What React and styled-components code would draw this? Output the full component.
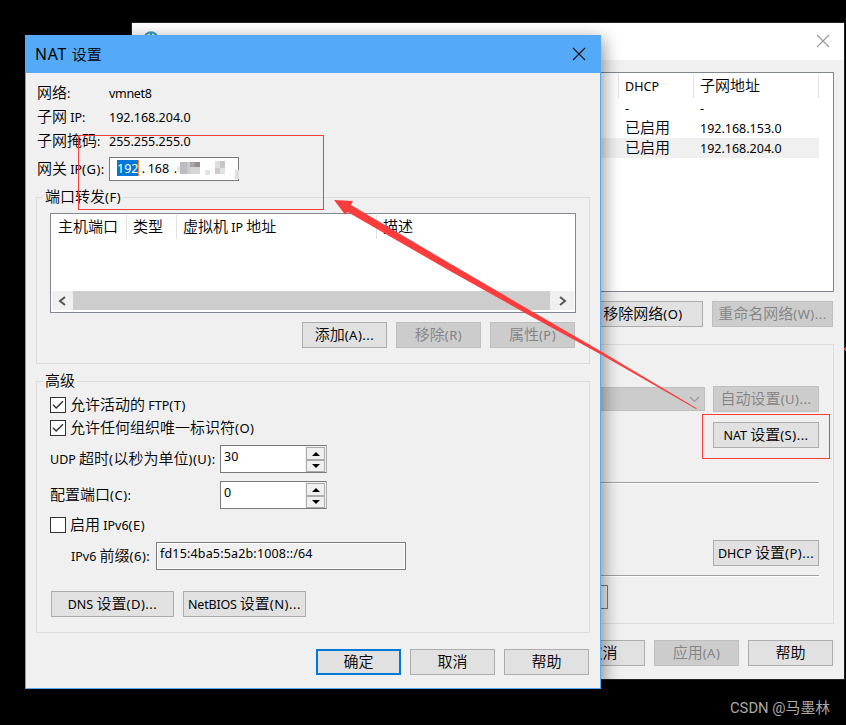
import React from "react";
import styled, { createGlobalStyle, css } from "styled-components";

const Global = createGlobalStyle`
  * { box-sizing: border-box; }
  body { margin: 0; background: #000; overflow: hidden; }
`;

const Desktop = styled.div`
  position: relative;
  width: 846px;
  height: 725px;
  overflow: hidden;
  background: #000;
  color: #000;
  font: 350 15px/20px "Noto Sans CJK SC", sans-serif;
  white-space: nowrap;
`;

const Latin = styled.span`
  font: 400 ${(p) => p.$size}px/1 "Noto Sans", "Noto Sans CJK SC", sans-serif;
  letter-spacing: ${(p) => p.$ls}px;
`;

/* Latin runs use a smaller face than the Chinese characters around them;
   bracketed access keys are set a little wider. */
function T({ children, size = 12.5, ls = 0 }) {
  return (
    <span>
      {children.split(/(\([\x21-\x7e]*|[\x20-\x27\x29-\x7e]+)/).map((s, i) => {
        if (i % 2 === 0) return s;
        const key = s.startsWith("(") || s.startsWith(")");
        return (
          <Latin key={i} $size={key ? 13 : size} $ls={key ? 0.5 : ls}>{s}</Latin>
        );
      })}
    </span>
  );
}

const Window = styled.section`
  position: absolute;
  display: flex;
  flex-direction: column;
  background: #f0f0f0;
`;

const NetworkEditor = styled(Window)`
  left: 131px;
  top: 22px;
  width: 714px;
  height: 658px;
  border: 1px solid #222;
`;

const NatDialog = styled(Window)`
  left: 25px;
  top: 35px;
  width: 576px;
  height: 654px;
  border: 1px solid #56a9f5;
  box-shadow: 3px 4px 16px rgba(0, 0, 0, 0.42);
`;

const TitleBar = styled.header`
  display: flex;
  flex: none;
  align-items: center;
  justify-content: space-between;
  height: 37px;
  padding: 0 14px 2px 9px;
  background: ${(p) => (p.$active ? "#55aaf7" : "#fff")};
  ${(p) => !p.$active && "padding-left: 11px;"}
`;

const Body = styled.div`
  display: flex;
  flex: 1;
  flex-direction: column;
  padding: ${(p) => p.$pad};
`;

const Button = styled.button`
  display: flex;
  flex: none;
  align-items: center;
  justify-content: center;
  width: ${(p) => p.$w || 85}px;
  height: 26px;
  padding: 0 0 3px 0;
  font: inherit;
  color: #000;
  background: #e1e1e1;
  border: 1px solid #adadad;
  border-radius: 0;
  ${(p) => p.$primary && css`
    border: 2px solid #0078d7;
  `}
  &:disabled {
    color: #838383;
    background: #ccc;
    border-color: #bfbfbf;
  }
`;

const ButtonRow = styled.div`
  display: flex;
  flex: none;
  gap: ${(p) => p.$gap || 9}px;
  justify-content: ${(p) => (p.$start ? "flex-start" : "flex-end")};
  margin: ${(p) => p.$m || 0};
`;

const Group = styled.div`
  display: flex;
  flex: none;
  flex-direction: column;
  height: ${(p) => p.$h}px;
  margin: ${(p) => p.$m || 0};
  padding: ${(p) => p.$pad || 0};
  border: 1px solid #dcdcdc;
`;

const Legend = styled.div`
  align-self: flex-start;
  height: 18px;
  margin: -10px 0 0 ${(p) => p.$ml}px;
  padding: 0 2px;
  line-height: 16px;
  background: #f0f0f0;
`;

const List = styled.div`
  display: flex;
  flex: none;
  flex-direction: column;
  height: ${(p) => p.$h}px;
  margin: ${(p) => p.$m || 0};
  border: 1px solid #828790;
  background: #fff;
`;

const HeadRow = styled.div`
  display: grid;
  flex: none;
  grid-template-columns: ${(p) => p.$cols};
  height: 24px;
  margin-top: 1px;
`;

const HeadCell = styled.div`
  padding-left: ${(p) => p.$pl || 6}px;
  line-height: 21px;
  border-right: ${(p) => (p.$last ? "0" : "1px solid #e3e3e3")};
`;

const DataRow = styled.div`
  display: grid;
  grid-template-columns: ${(p) => p.$cols};
  width: 675px;
  height: 20px;
  line-height: 17px;
  background: ${(p) => (p.$selected ? "#f0f0f0" : "#fff")};
`;

const DataCell = styled.div`
  padding-left: 6px;
`;

const ScrollBar = styled.div`
  display: flex;
  height: 19px;
  margin: auto 1px 2px;
  background: #f0f0f0;
`;

const ScrollArrow = styled.div`
  display: flex;
  align-items: center;
  justify-content: center;
  width: ${(p) => p.$w}px;
`;

const ScrollThumb = styled.div`
  flex: 1;
  background: #cdcdcd;
`;

const Field = styled.div`
  display: flex;
  align-items: center;
  height: ${(p) => p.$h}px;
  margin-top: ${(p) => p.$mt || 0}px;
  padding-left: ${(p) => p.$indent || 0}px;
`;

const FieldLabel = styled.div`
  width: ${(p) => p.$w}px;
  flex: none;
  padding-bottom: 2px;
`;

const FieldValue = styled.div`
  padding-bottom: 2px;
`;

const IpBox = styled.div`
  display: flex;
  align-items: center;
  width: 130px;
  height: 24px;
  padding: 0 0 0 7px;
  background: #fff;
  border: 1px solid #7a7a7a;
`;

const Selected = styled.span`
  height: 16px;
  margin-top: -2px;
  line-height: 13px;
  color: #fff;
  background: #0078d7;
  border-right: 1px solid #ff8728;
`;

const IpPart = styled.span`
  width: ${(p) => p.$w}px;
  margin-top: -4px;
  text-align: center;
`;

const Spinner = styled.div`
  display: flex;
  width: 107px;
  height: 28px;
  background: #fff;
  border: 1px solid #7a7a7a;
  border-right-color: #abadb3;
`;

const SpinnerValue = styled.div`
  flex: 1;
  padding-left: 3px;
  line-height: 17px;
`;

const SpinnerButtons = styled.div`
  display: grid;
  grid-template-rows: 13px 12px;
  width: 21px;
  height: 26px;
  padding: 1px 1px 0 1px;
  background: #f0f0f0;
`;

const SpinnerButton = styled.div`
  display: flex;
  align-items: center;
  justify-content: center;
  background: #f0f0f0;
  border: 1px solid #acacac;
`;

const PrefixBox = styled.div`
  width: 250px;
  height: 28px;
  padding-left: 3px;
  line-height: 18px;
  border: 1px solid #7a7a7a;
  box-shadow: inset 0 0 0 1px #fff;
`;

const CheckRow = styled.label`
  display: flex;
  flex: none;
  align-items: center;
  gap: 4px;
  height: 16px;
  margin-top: ${(p) => p.$mt}px;
`;

const CheckText = styled.span`
  padding-bottom: 2px;
`;

const CheckBox = styled.span`
  display: flex;
  width: 16px;
  height: 16px;
  background: #fff;
  border: 1px solid #333;
`;

const Combo = styled.div`
  display: flex;
  align-items: center;
  justify-content: flex-end;
  width: 400px;
  height: 24px;
  margin-top: 1px;
  padding-right: 4px;
  background: #ccc;
  border: 1px solid #bfbfbf;
`;

const Rule = styled.div`
  flex: none;
  height: 2px;
  margin: ${(p) => p.$m};
  background: #fff;
  border-top: 1px solid #a0a0a0;
`;

const SubnetBox = styled.div`
  width: 200px;
  height: 24px;
  margin-left: 264px;
  border: 1px solid #7a7a7a;
`;

const Annotations = styled.svg`
  position: absolute;
  inset: 0;
  pointer-events: none;
`;

const Watermark = styled.div`
  position: absolute;
  right: 16px;
  bottom: 7px;
  font: 400 14.8px/20px Roboto, "Noto Sans CJK SC", sans-serif;
  color: #a9a9a9;
`;

function CloseIcon({ color }) {
  return (
    <svg width="14" height="14" viewBox="0 0 14 14">
      <path d="M1 1 13 13M13 1 1 13" stroke={color} strokeWidth="1.1" fill="none" />
    </svg>
  );
}

function Chevron({ d, w = 9, h = 10, color = "#555", sw = 2 }) {
  return (
    <svg width={w} height={h} viewBox={`0 0 ${w} ${h}`}>
      <path d={d} fill="none" stroke={color} strokeWidth={sw} />
    </svg>
  );
}

function Triangle({ down }) {
  return (
    <svg width="8" height="4" viewBox="0 0 8 4">
      <path d={down ? "M0 0H8L4 4Z" : "M0 4H8L4 0Z"} fill="#000" />
    </svg>
  );
}

function NumberField({ value }) {
  return (
    <Spinner>
      <SpinnerValue><T>{value}</T></SpinnerValue>
      <SpinnerButtons>
        <SpinnerButton><Triangle /></SpinnerButton>
        <SpinnerButton><Triangle down /></SpinnerButton>
      </SpinnerButtons>
    </Spinner>
  );
}

function Check({ checked, mt, children }) {
  return (
    <CheckRow $mt={mt}>
      <CheckBox>
        {checked && (
          <svg width="14" height="14" viewBox="0 0 14 14">
            <path d="M2 6.8 5.2 10 12 3.2" fill="none" stroke="#333" strokeWidth="1.5" />
          </svg>
        )}
      </CheckBox>
      <CheckText>{children}</CheckText>
    </CheckRow>
  );
}

const MOSAIC = [
  [180, 162, 7, 12, "#bdbcc2"], [187, 162, 4, 12, "#c9cbd0"], [190, 162, 5, 5, "#aaa49f"],
  [195, 162, 5, 5, "#8f8e99"], [190, 167, 10, 7, "#d5d5d8"], [177, 166, 3, 6, "#eceae6"],
  [205, 170, 5, 5, "#e3e3e3"], [215, 161, 5, 7, "#dedede"], [220, 161, 5, 7, "#c6c6c9"],
  [215, 168, 5, 6, "#d1c9c1"], [220, 168, 5, 6, "#dfe3e8"], [235, 170, 4, 9, "#dedede"],
];

const netCols = "475px 75px 125px";

export default function App() {
  return (
    <Desktop>
      <Global />
      <NetworkEditor>
        <TitleBar>
          <svg width="16" height="20" viewBox="0 0 16 20">
            <circle cx="8" cy="8" r="6.8" fill="#d5edf5" stroke="#3a9dc0" strokeWidth="2" />
            <path d="M8 1V15M2 8H14" stroke="#3a9dc0" strokeWidth="2" />
          </svg>
          <CloseIcon color="#999" />
        </TitleBar>
        <Body $pad="12px 10px 13px 11px">
          <List $h={220}>
            <HeadRow $cols={netCols}>
              <HeadCell />
              <HeadCell><T ls={0.1}>DHCP</T></HeadCell>
              <HeadCell>子网地址</HeadCell>
            </HeadRow>
            <DataRow $cols={netCols}>
              <DataCell /><DataCell><T>-</T></DataCell><DataCell><T>-</T></DataCell>
            </DataRow>
            <DataRow $cols={netCols}>
              <DataCell /><DataCell>已启用</DataCell><DataCell><T>192.168.153.0</T></DataCell>
            </DataRow>
            <DataRow $cols={netCols} $selected>
              <DataCell /><DataCell>已启用</DataCell><DataCell><T>192.168.204.0</T></DataCell>
            </DataRow>
          </List>
          <ButtonRow $m="9px 1px 0 0">
            <Button $w={120}><T>移除网络(O)</T></Button>
            <Button $w={121} disabled><T>重命名网络(W)...</T></Button>
          </ButtonRow>
          <Group $h={280} $m="17px 0 16px" $pad="41px 14px 0 0">
            <ButtonRow $gap={8}>
              <Combo>
                <Chevron d="M1 1 5.5 5.5 10 1" w={11} h={7} color="#999" sw={1.2} />
              </Combo>
              <Button $w={106} disabled><T>自动设置(U)...</T></Button>
            </ButtonRow>
            <ButtonRow $m="10px 0 0"><Button $w={106}><T>NAT 设置(S)...</T></Button></ButtonRow>
            <Rule $m="34px 0 56px" />
            <ButtonRow><Button $w={106}><T>DHCP 设置(P)...</T></Button></ButtonRow>
            <Rule $m="9px 0 8px" />
            <SubnetBox />
          </Group>
          <ButtonRow $m="0 1px 0 0">
            <Button>取消</Button>
            <Button disabled><T>应用(A)</T></Button>
            <Button>帮助</Button>
          </ButtonRow>
        </Body>
      </NetworkEditor>

      <NatDialog>
        <TitleBar $active>
          <T size={15.8} ls={0.7}>NAT 设置</T>
          <CloseIcon color="#111" />
        </TitleBar>
        <Body $pad="8px 10px 0">
          <Field $h={24} $indent={1}><FieldLabel $w={72}><T>网络:</T></FieldLabel><FieldValue><T ls={-0.3}>vmnet8</T></FieldValue></Field>
          <Field $h={24} $indent={1}><FieldLabel $w={72}><T>子网 IP:</T></FieldLabel><FieldValue><T>192.168.204.0</T></FieldValue></Field>
          <Field $h={24} $indent={1}><FieldLabel $w={72}><T>子网掩码:</T></FieldLabel><FieldValue><T>255.255.255.0</T></FieldValue></Field>
          <Field $h={24} $mt={4} $indent={1}>
            <FieldLabel $w={72}><T>网关 IP(G):</T></FieldLabel>
            <IpBox>
              <Selected><T>192</T></Selected>
              <IpPart $w={8}><T>.</T></IpPart>
              <IpPart $w={22}><T>168</T></IpPart>
              <IpPart $w={12}><T>.</T></IpPart>
            </IpBox>
          </Field>

          <Group $h={167} $m="16px 0 0">
            <Legend $ml={6}><T>端口转发(F)</T></Legend>
            <List $h={100} $m="7px 13px 0">
              <HeadRow $cols="76px 50px 200px 1fr">
                <HeadCell $pl={7}>主机端口</HeadCell>
                <HeadCell>类型</HeadCell>
                <HeadCell><T>虚拟机 IP 地址</T></HeadCell>
                <HeadCell $last>描述</HeadCell>
              </HeadRow>
              <ScrollBar>
                <ScrollArrow $w={21}><Chevron d="M7 1 2 5 7 9" /></ScrollArrow>
                <ScrollThumb />
                <ScrollArrow $w={24}><Chevron d="M2 1 7 5 2 9" /></ScrollArrow>
              </ScrollBar>
            </List>
            <ButtonRow $m="9px 14px 0 0">
              <Button><T>添加(A)...</T></Button>
              <Button disabled><T>移除(R)</T></Button>
              <Button disabled><T>属性(P)</T></Button>
            </ButtonRow>
          </Group>

          <Group $h={252} $m="17px 0 0" $pad="0 13px">
            <Legend $ml={-7}>高级</Legend>
            <Check checked mt={7}><T>允许活动的 FTP(T)</T></Check>
            <Check checked mt={7}><T>允许任何组织唯一标识符(O)</T></Check>
            <Field $h={28} $mt={9}>
              <FieldLabel $w={170}><T>UDP 超时(以秒为单位)(U):</T></FieldLabel>
              <NumberField value="30" />
            </Field>
            <Field $h={28} $mt={8}>
              <FieldLabel $w={170}><T>配置端口(C):</T></FieldLabel>
              <NumberField value="0" />
            </Field>
            <Check mt={8}><T>启用 IPv6(E)</T></Check>
            <Field $h={28} $mt={9} $indent={21}>
              <FieldLabel $w={85}><T>IPv6 前缀(6):</T></FieldLabel>
              <PrefixBox><T ls={0.17}>fd15:4ba5:5a2b:1008::/64</T></PrefixBox>
            </Field>
            <ButtonRow $start $m="21px 0 0 1px">
              <Button $w={123}><T>DNS 设置(D)...</T></Button>
              <Button $w={123}><T ls={-0.2}>NetBIOS 设置(N)...</T></Button>
            </ButtonRow>
          </Group>

          <ButtonRow $m="16px 1px 0 0">
            <Button $primary>确定</Button>
            <Button>取消</Button>
            <Button>帮助</Button>
          </ButtonRow>
        </Body>
      </NatDialog>

      <Annotations width="846" height="725" viewBox="0 0 846 725">
        {MOSAIC.map(([x, y, w, h, c]) => (
          <rect key={`${x}-${y}`} x={x} y={y} width={w} height={h} fill={c} />
        ))}
        <rect x="78.5" y="135.5" width="245" height="74" fill="none" stroke="#fa3c3c" />
        <rect x="702.5" y="414.5" width="127" height="44" fill="none" stroke="#fa3c3c" />
        <path d="M334 200 353 201 351 205 450 263.5 530 310.3 600 350.7 697 408.5 696 409 600 354 530 315.8 450 271 347.5 212 345 214.5Z" fill="#fa3c3c" />
        <path d="M844 349 846 347.5V351Z" fill="#d04a4a" stroke="#d04a4a" />
      </Annotations>
      <Watermark>CSDN @马墨林</Watermark>
    </Desktop>
  );
}
